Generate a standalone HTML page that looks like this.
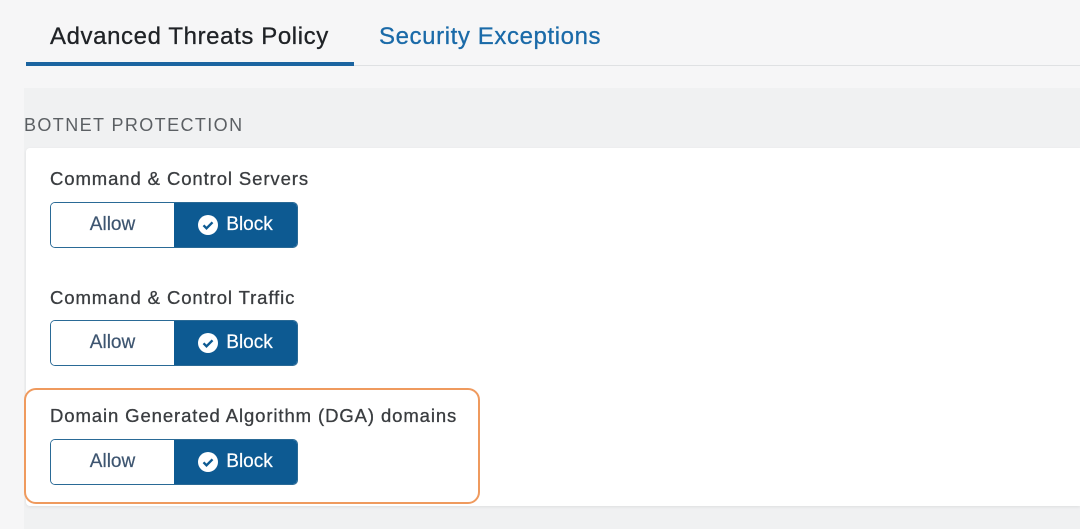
<!DOCTYPE html>
<html><head><style>
body{margin:0;width:1080px;height:529px;background:#f6f6f7;font-family:"Liberation Sans",sans-serif;position:relative;overflow:hidden}
.a{position:absolute}
.tab{top:22px;font-size:24px;line-height:30px;letter-spacing:0.6px;-webkit-text-stroke:0.3px}
.lbl{font-size:18.5px;color:#3a3d40;line-height:22px;left:50px;letter-spacing:0.9px;-webkit-text-stroke:0.3px}
.tg{left:50px;width:248px;height:46px;border:1.5px solid #2a6a96;border-radius:5px;box-sizing:border-box;overflow:hidden;display:flex}
.tg div{flex:1;display:flex;align-items:center;justify-content:center;font-size:19px;-webkit-text-stroke:0.2px}
.al{color:#3d5570;background:#fff}
.bl{background:#0d5a92;color:#fff}
.bl svg{margin-right:8px}
</style></head><body>
<div class="a tab" style="left:50px;color:#1f2226">Advanced Threats Policy</div>
<div class="a tab" style="left:379px;color:#1a6aa8;-webkit-text-stroke:0.3px #1a6aa8">Security Exceptions</div>
<div class="a" style="left:26px;top:62px;width:328px;height:4px;background:#1b64a0"></div>
<div class="a" style="left:354px;top:65px;width:726px;height:1px;background:#dfe1e3"></div>
<div class="a" style="left:24px;top:88px;width:1056px;height:441px;background:#f0f1f2"></div>
<div class="a" style="left:24px;top:115px;font-size:18px;color:#5b5f63;letter-spacing:1.4px">BOTNET PROTECTION</div>
<div class="a" style="left:26px;top:148px;width:1054px;height:358px;background:#fff;border-radius:4px 0 0 4px;box-shadow:0 1px 3px rgba(0,0,0,.08)"></div>
<div class="a" style="left:24px;top:388px;width:456px;height:116px;border:2px solid #ef9a5e;border-radius:12px;box-sizing:border-box"></div>
<div class="a lbl" style="top:168px">Command &amp; Control Servers</div>
<div class="a lbl" style="top:287px">Command &amp; Control Traffic</div>
<div class="a lbl" style="top:405px">Domain Generated Algorithm (DGA) domains</div>
<div class="a tg" style="top:202px"><div class="al">Allow</div><div class="bl"><svg width="20" height="20" viewBox="0 0 20 20"><circle cx="10" cy="10" r="10" fill="#fff"/><path d="M5.5 10.3l3 3 6-6" stroke="#0d5a92" stroke-width="2.4" fill="none"/></svg>Block</div></div>
<div class="a tg" style="top:320px"><div class="al">Allow</div><div class="bl"><svg width="20" height="20" viewBox="0 0 20 20"><circle cx="10" cy="10" r="10" fill="#fff"/><path d="M5.5 10.3l3 3 6-6" stroke="#0d5a92" stroke-width="2.4" fill="none"/></svg>Block</div></div>
<div class="a tg" style="top:439px"><div class="al">Allow</div><div class="bl"><svg width="20" height="20" viewBox="0 0 20 20"><circle cx="10" cy="10" r="10" fill="#fff"/><path d="M5.5 10.3l3 3 6-6" stroke="#0d5a92" stroke-width="2.4" fill="none"/></svg>Block</div></div>
</body></html>
